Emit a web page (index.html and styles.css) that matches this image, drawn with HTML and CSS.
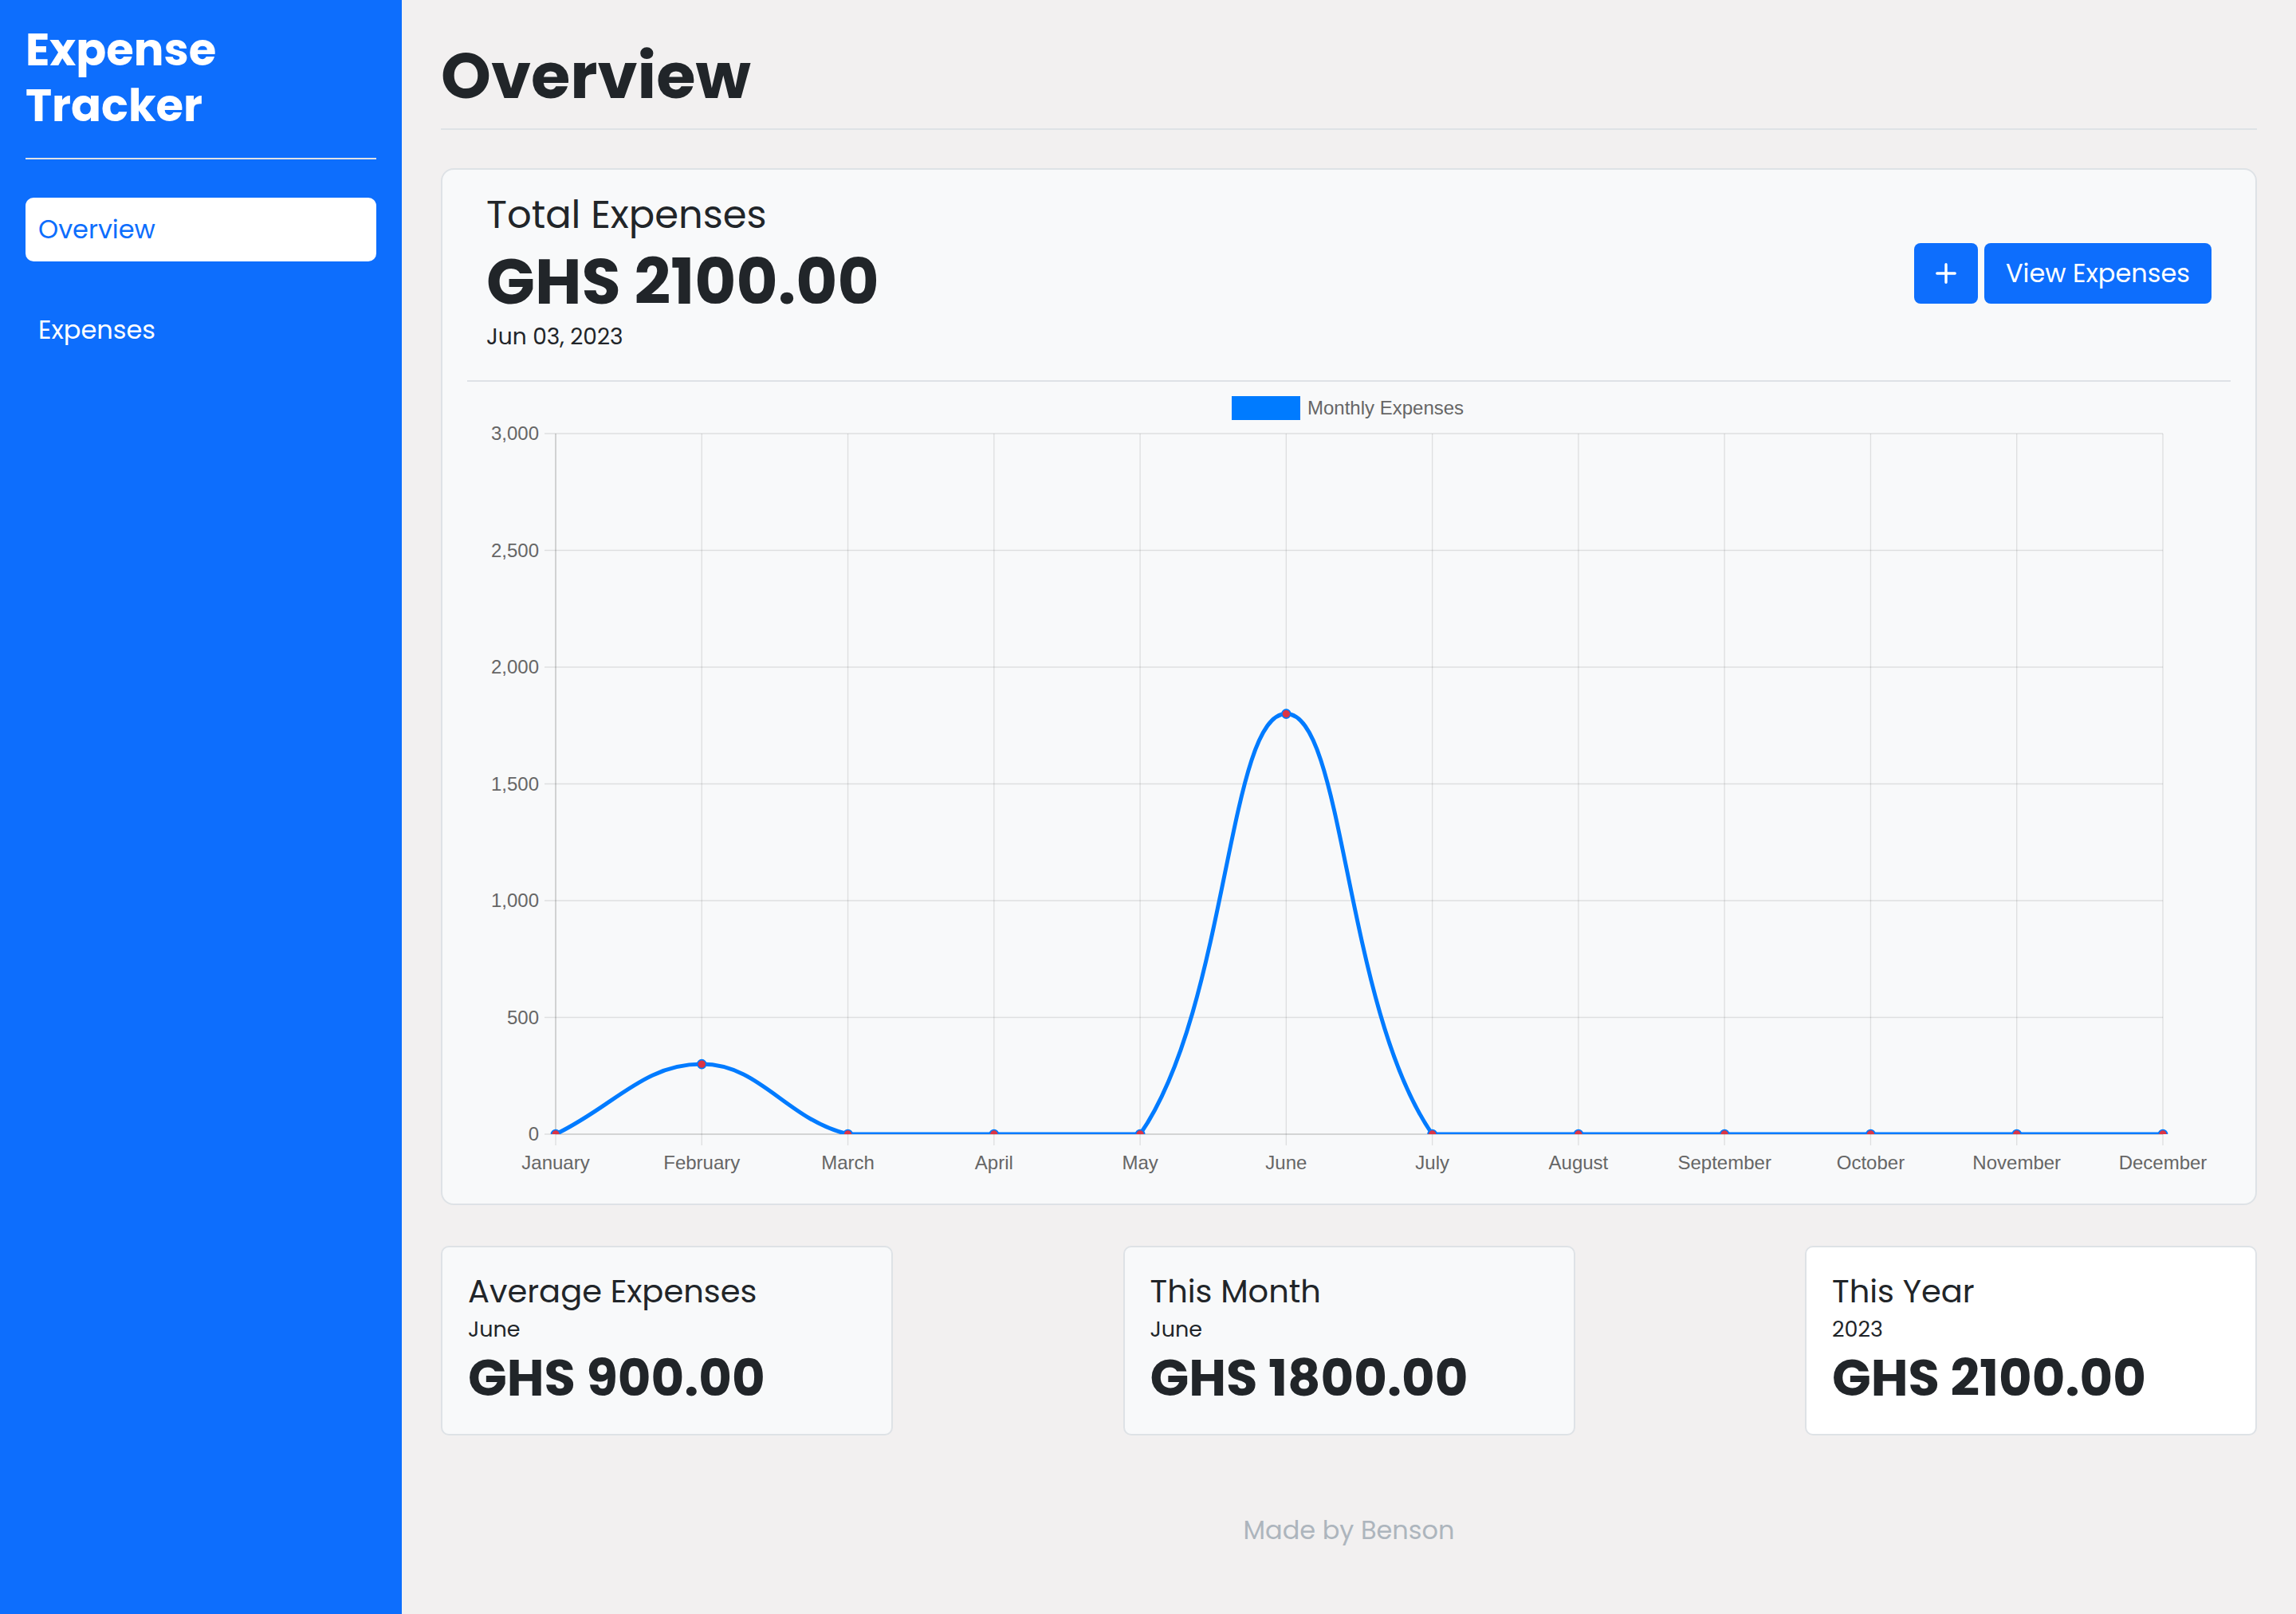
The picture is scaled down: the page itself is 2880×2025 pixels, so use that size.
FILE: index.html
```html
<!DOCTYPE html>
<html lang="en">
<head>
<meta charset="utf-8">
<title>Expense Tracker</title>
<link rel="stylesheet" href="styles.css">
</head>
<body>
<div class="app">
  <aside class="sidebar">
    <h1 class="brand">Expense Tracker</h1>
    <div class="brand-rule"></div>
    <nav class="nav">
      <a class="nav-item active" href="#">Overview</a>
      <a class="nav-item" href="#">Expenses</a>
    </nav>
  </aside>
  <main class="main">
    <h2 class="page-title">Overview</h2>
    <div class="page-rule"></div>

    <section class="card">
      <div class="card-head">
        <div class="summary">
          <div class="label-lg">Total Expenses</div>
          <div class="amount-xl">GHS 2100.00</div>
          <div class="date">Jun 03, 2023</div>
        </div>
        <div class="actions">
          <button class="btn btn-icon" aria-label="Add expense">
            <svg width="26" height="26" viewBox="0 0 26 26"><path d="M13 1.8V24.2M1.8 13H24.2" stroke="#fff" stroke-width="3.4" stroke-linecap="round" fill="none"/></svg>
          </button>
          <button class="btn">View Expenses</button>
        </div>
      </div>
      <div class="card-rule"></div>

      <svg class="chart" width="2211" height="1003" viewBox="586 479 2211 1003">
        <defs>
          <clipPath id="plot-clip"><rect x="586" y="544" width="2211" height="879"/></clipPath>
        </defs>
        <!-- legend -->
        <rect x="1545" y="497" width="86" height="30" fill="#007bff"/>
        <text class="chart-text" x="1640" y="520">Monthly Expenses</text>

        <!-- horizontal grid -->
        <g stroke="rgba(0,0,0,0.1)" stroke-width="1.6">
          <line x1="683" y1="544" x2="2713" y2="544"/>
          <line x1="683" y1="690.5" x2="2713" y2="690.5"/>
          <line x1="683" y1="837" x2="2713" y2="837"/>
          <line x1="683" y1="983.5" x2="2713" y2="983.5"/>
          <line x1="683" y1="1130" x2="2713" y2="1130"/>
          <line x1="683" y1="1276.5" x2="2713" y2="1276.5"/>
          <line x1="683" y1="1423" x2="697" y2="1423"/>
        </g>
        <!-- vertical grid -->
        <g stroke="rgba(0,0,0,0.1)" stroke-width="1.4">
          <line x1="697" y1="1423" x2="697" y2="1437"/>
          <line x1="880.27" y1="544" x2="880.27" y2="1437"/>
          <line x1="1063.55" y1="544" x2="1063.55" y2="1437"/>
          <line x1="1246.82" y1="544" x2="1246.82" y2="1437"/>
          <line x1="1430.09" y1="544" x2="1430.09" y2="1437"/>
          <line x1="1613.36" y1="544" x2="1613.36" y2="1437"/>
          <line x1="1796.64" y1="544" x2="1796.64" y2="1437"/>
          <line x1="1979.91" y1="544" x2="1979.91" y2="1437"/>
          <line x1="2163.18" y1="544" x2="2163.18" y2="1437"/>
          <line x1="2346.45" y1="544" x2="2346.45" y2="1437"/>
          <line x1="2529.73" y1="544" x2="2529.73" y2="1437"/>
          <line x1="2713" y1="544" x2="2713" y2="1437"/>
        </g>
        <!-- axes -->
        <g stroke="rgba(0,0,0,0.2)" stroke-width="1.6">
          <line x1="697" y1="544" x2="697" y2="1423"/>
          <line x1="697" y1="1423" x2="2713" y2="1423"/>
        </g>

        <!-- y labels -->
        <g class="chart-text" text-anchor="end">
          <text x="676" y="552">3,000</text>
          <text x="676" y="698.5">2,500</text>
          <text x="676" y="845">2,000</text>
          <text x="676" y="991.5">1,500</text>
          <text x="676" y="1138">1,000</text>
          <text x="676" y="1284.5">500</text>
          <text x="676" y="1431">0</text>
        </g>
        <!-- x labels -->
        <g class="chart-text" text-anchor="middle">
          <text x="697" y="1467">January</text>
          <text x="880.27" y="1467">February</text>
          <text x="1063.55" y="1467">March</text>
          <text x="1246.82" y="1467">April</text>
          <text x="1430.09" y="1467">May</text>
          <text x="1613.36" y="1467">June</text>
          <text x="1796.64" y="1467">July</text>
          <text x="1979.91" y="1467">August</text>
          <text x="2163.18" y="1467">September</text>
          <text x="2346.45" y="1467">October</text>
          <text x="2529.73" y="1467">November</text>
          <text x="2713" y="1467">December</text>
        </g>

        <!-- data -->
        <g clip-path="url(#plot-clip)">
          <path d="M697,1423 C770.31,1387.84 806.96,1335.1 880.27,1335.1 C953.58,1335.1 986.46,1404.51 1063.55,1423 C1133.05,1423 1173.51,1423 1246.82,1423 L1430.09,1423 C1540.49,1264.15 1540.05,895.6 1613.36,895.6 C1686.67,895.6 1686.24,1264.15 1796.64,1423 L2713,1423" fill="none" stroke="#007bff" stroke-width="5" stroke-linejoin="round"/>
          <g fill="#dc3545" stroke="#007bff" stroke-width="1.65">
            <circle cx="697" cy="1423" r="5.5"/>
            <circle cx="880.27" cy="1335.1" r="5.5"/>
            <circle cx="1063.55" cy="1423" r="5.5"/>
            <circle cx="1246.82" cy="1423" r="5.5"/>
            <circle cx="1430.09" cy="1423" r="5.5"/>
            <circle cx="1613.36" cy="895.6" r="5.5"/>
            <circle cx="1796.64" cy="1423" r="5.5"/>
            <circle cx="1979.91" cy="1423" r="5.5"/>
            <circle cx="2163.18" cy="1423" r="5.5"/>
            <circle cx="2346.45" cy="1423" r="5.5"/>
            <circle cx="2529.73" cy="1423" r="5.5"/>
            <circle cx="2713" cy="1423" r="5.5"/>
          </g>
        </g>
      </svg>
    </section>

    <div class="stats">
      <div class="stat">
        <div class="stat-title">Average Expenses</div>
        <div class="stat-sub">June</div>
        <div class="stat-amount">GHS 900.00</div>
      </div>
      <div class="stat">
        <div class="stat-title">This Month</div>
        <div class="stat-sub">June</div>
        <div class="stat-amount">GHS 1800.00</div>
      </div>
      <div class="stat stat-white">
        <div class="stat-title">This Year</div>
        <div class="stat-sub">2023</div>
        <div class="stat-amount">GHS 2100.00</div>
      </div>
    </div>

    <footer class="footer">Made by Benson</footer>
  </main>
</div>
</body>
</html>
```

FILE: styles.css
```css
* {
  box-sizing: border-box;
}

html,
body {
  margin: 0;
  padding: 0;
}

body {
  font-family: Poppins, Inter, "Noto Sans", sans-serif;
  color: #212529;
  background: #f2f0f0;
}

.app {
  display: flex;
  min-height: 100vh;
}

/* Sidebar */
.sidebar {
  width: 504px;
  flex-shrink: 0;
  background: #0d6efd;
  padding: 28px 32px;
  color: #fff;
}

.brand {
  margin: 0;
  max-width: 300px;
  font-size: 56px;
  line-height: 70px;
  font-weight: 700;
}

.brand-rule {
  margin-top: 30px;
  height: 2px;
  background: #dee2e6;
}

.nav {
  display: flex;
  flex-direction: column;
  gap: 46px;
  margin-top: 48px;
}

.nav-item {
  display: block;
  height: 80px;
  line-height: 80px;
  padding: 0 16px;
  font-size: 32px;
  color: #fff;
  text-decoration: none;
  border-radius: 10px;
}

.nav-item.active {
  background: #fff;
  color: #0d6efd;
}

/* Main */
.main {
  flex: 1;
  padding: 49px 49px 0 49px;
}

.page-title {
  margin: 0;
  font-size: 80px;
  line-height: 92px;
  font-weight: 700;
}

.page-rule {
  margin-top: 20px;
  height: 2px;
  background: #dee2e6;
}

.card {
  margin-top: 48px;
  background: #f8f9fa;
  border: 2px solid #dee2e6;
  border-radius: 16px;
  padding: 29px 31px 28px;
}

.card-head {
  display: flex;
  justify-content: space-between;
  align-items: center;
  padding: 0 24px 33px;
}

.label-lg {
  font-size: 48px;
  line-height: 56px;
  font-weight: 400;
}

.amount-xl {
  margin-top: 6.5px;
  font-size: 80px;
  line-height: 97px;
  font-weight: 700;
}

.date {
  margin-top: 0.5px;
  font-size: 28px;
  line-height: 42px;
}

.actions {
  display: flex;
  gap: 8px;
}

.btn {
  height: 76px;
  padding: 0 27px;
  border: 0;
  border-radius: 8px;
  background: #0d6efd;
  color: #fff;
  font-family: inherit;
  font-size: 32px;
  cursor: pointer;
}

.btn-icon {
  width: 80px;
  padding: 0;
  display: flex;
  align-items: center;
  justify-content: center;
}

.card-rule {
  height: 2px;
  background: #dee2e6;
}

.chart {
  display: block;
}

.chart-text {
  font-family: "Liberation Sans", Arial, Helvetica, sans-serif;
  font-size: 24px;
  fill: #666;
}

/* Stats */
.stats {
  display: flex;
  justify-content: space-between;
  margin-top: 51px;
}

.stat {
  width: 567px;
  height: 238px;
  background: #f8f9fa;
  border: 2px solid #dee2e6;
  border-radius: 10px;
  padding: 31px 32px;
}

.stat-white {
  background: #fff;
}

.stat-title {
  font-size: 40px;
  line-height: 48px;
}

.stat-sub {
  margin-top: 6px;
  font-size: 27px;
  line-height: 36px;
}

.stat-amount {
  margin-top: 3px;
  font-size: 64px;
  line-height: 80px;
  font-weight: 700;
}

.footer {
  margin-top: 95px;
  text-align: center;
  font-size: 32px;
  line-height: 48px;
  color: #adb5bd;
}
```
